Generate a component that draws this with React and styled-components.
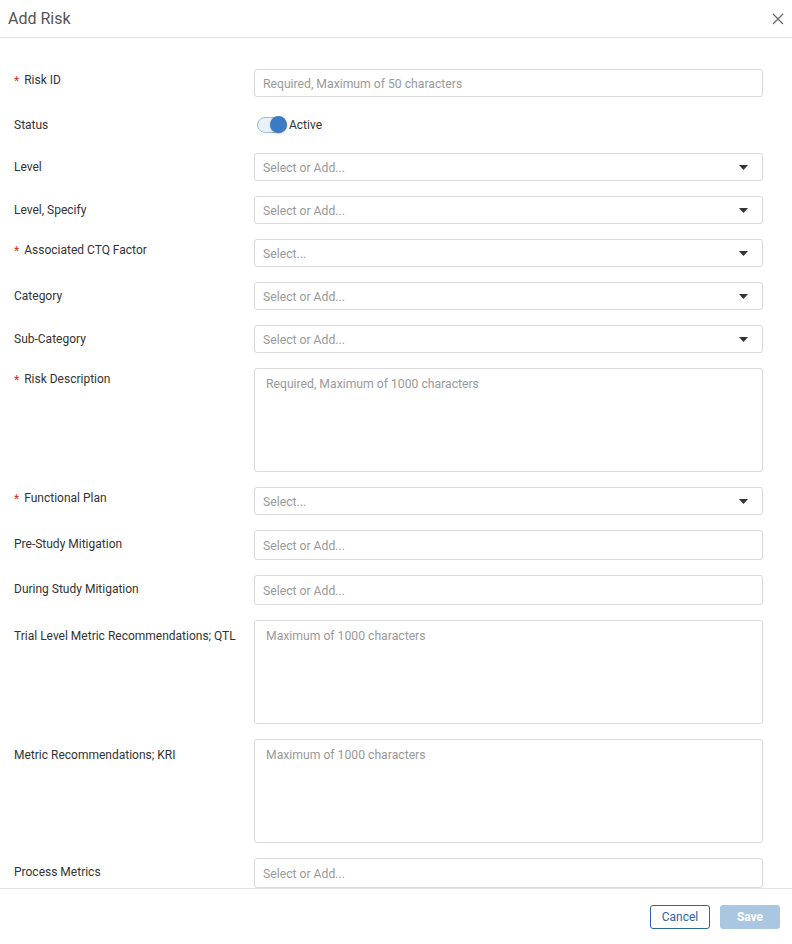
import React from "react"
import styled, { createGlobalStyle } from "styled-components"

const GlobalStyle = createGlobalStyle`
  html, body {
    margin: 0;
    padding: 0;
    background: #fff;
  }
  body {
    font-family: Roboto, "Liberation Sans", Arial, sans-serif;
    color: #333;
  }
`

const fields = [
  { label: "Risk ID", required: true, kind: "input", placeholder: "Required, Maximum of 50 characters" },
  { label: "Status", kind: "toggle" },
  { label: "Level", kind: "select", placeholder: "Select or Add..." },
  { label: "Level, Specify", kind: "select", placeholder: "Select or Add..." },
  { label: "Associated CTQ Factor", required: true, kind: "select", placeholder: "Select..." },
  { label: "Category", kind: "select", placeholder: "Select or Add..." },
  { label: "Sub-Category", kind: "select", placeholder: "Select or Add..." },
  { label: "Risk Description", required: true, kind: "area", placeholder: "Required, Maximum of 1000 characters" },
  { label: "Functional Plan", required: true, kind: "select", placeholder: "Select..." },
  { label: "Pre-Study Mitigation", kind: "multi", placeholder: "Select or Add..." },
  { label: "During Study Mitigation", kind: "multi", placeholder: "Select or Add..." },
  { label: "Trial Level Metric Recommendations; QTL", kind: "area", placeholder: "Maximum of 1000 characters" },
  { label: "Metric Recommendations; KRI", kind: "area", placeholder: "Maximum of 1000 characters" },
  { label: "Process Metrics", kind: "multi", placeholder: "Select or Add..." },
]

const Caret = () => (
  <svg width="9" height="5" viewBox="0 0 9 5">
    <path d="M0 0h9L4.5 5z" fill="#333" />
  </svg>
)

const CloseIcon = () => (
  <svg width="12" height="12" viewBox="0 0 12 12">
    <path d="M1 1l10 10M11 1L1 11" stroke="#666" strokeWidth="1.2" fill="none" />
  </svg>
)

const Control = ({ field }) => {
  if (field.kind === "toggle") {
    return (
      <ToggleWrap>
        <Track>
          <Knob />
        </Track>
        <ToggleText>Active</ToggleText>
      </ToggleWrap>
    )
  }
  if (field.kind === "area") {
    return <TextArea placeholder={field.placeholder} />
  }
  return (
    <Box $tall={field.kind === "multi"}>
      <Placeholder>{field.placeholder}</Placeholder>
      {field.kind === "select" && <Caret />}
    </Box>
  )
}

const App = () => {
  return (
    <>
      <GlobalStyle />
      <Dialog>
        <Header>
          <Title>Add Risk</Title>
          <CloseButton>
            <CloseIcon />
          </CloseButton>
        </Header>
        <Body>
          {fields.map((field) => (
            <Row key={field.label} $toggle={field.kind === "toggle"}>
              <Label
                $required={field.required}
                $area={field.kind === "area"}
                $toggle={field.kind === "toggle"}
              >
                {field.required && <Star>*</Star>}
                {field.label}
              </Label>
              <Control field={field} />
            </Row>
          ))}
        </Body>
        <Footer>
          <CancelButton>Cancel</CancelButton>
          <SaveButton>Save</SaveButton>
        </Footer>
      </Dialog>
    </>
  )
}

export default App

const Dialog = styled.div`
  width: 792px;
  height: 944px;
  display: flex;
  flex-direction: column;
  background: #fff;
`

const Header = styled.div`
  height: 37px;
  border-bottom: 1px solid #e3e3e3;
  display: flex;
  align-items: center;
  justify-content: space-between;
  padding: 0 7px 0 8px;
  flex-shrink: 0;
`

const Title = styled.h2`
  margin: 0;
  font-size: 16px;
  font-weight: 400;
  color: #555;
`

const CloseButton = styled.div`
  width: 14px;
  height: 14px;
  display: flex;
  align-items: center;
  justify-content: center;
`

const Body = styled.div`
  flex: 1;
  overflow: hidden;
  padding: 31px 29px 0 14px;
  display: flex;
  flex-direction: column;
  gap: 15px;
`

const Row = styled.div`
  display: grid;
  grid-template-columns: 240px 1fr;
  align-items: ${(p) => (p.$toggle ? "center" : "start")};
  min-height: ${(p) => (p.$toggle ? "26px" : "auto")};
  flex-shrink: 0;
`

const Label = styled.div`
  font-size: 12px;
  line-height: 14px;
  color: #333;
  padding-top: ${(p) => (p.$toggle ? "0" : p.$required ? "4px" : p.$area ? "9px" : "7px")};
  margin-top: ${(p) => (p.$toggle ? "-1px" : "0")};
  white-space: nowrap;
`

const Star = styled.span`
  color: #d0342c;
  font-size: 12px;
  margin-right: 5px;
  position: relative;
  top: 1px;
`

const Box = styled.div`
  height: ${(p) => (p.$tall ? "28px" : "26px")};
  border: 1px solid #d9d9d9;
  border-radius: 3px;
  display: flex;
  align-items: center;
  justify-content: space-between;
  padding: 0 14px 0 8px;
`

const Placeholder = styled.span`
  font-size: 12.2px;
  color: #9a9a9a;
  padding-top: 2px;
`

const TextArea = styled.textarea`
  height: 104px;
  box-sizing: border-box;
  border: 1px solid #d9d9d9;
  border-radius: 3px;
  padding: 8px 11px;
  font-family: Roboto, "Liberation Sans", Arial, sans-serif;
  font-size: 12.2px;
  line-height: 14px;
  resize: none;
  outline: none;
  &::placeholder {
    color: #9a9a9a;
  }
`

const ToggleWrap = styled.div`
  display: flex;
  align-items: center;
  padding-left: 3px;
  gap: 2px;
`

const Track = styled.div`
  width: 28px;
  height: 14px;
  border-radius: 8px;
  background: #eaf1f9;
  border: 1px solid #9dbbe0;
  position: relative;
`

const Knob = styled.div`
  position: absolute;
  right: -1px;
  top: -2px;
  width: 17px;
  height: 17px;
  border-radius: 50%;
  background: #3b7bc4;
  box-shadow: 0 1px 2px rgba(0, 0, 0, 0.25);
`

const ToggleText = styled.span`
  font-size: 12px;
  color: #333;
`

const Footer = styled.div`
  height: 55px;
  border-top: 1px solid #e3e3e3;
  display: flex;
  align-items: center;
  justify-content: flex-end;
  gap: 10px;
  padding: 0 12px 0 0;
  flex-shrink: 0;
`

const CancelButton = styled.button`
  width: 60px;
  height: 24px;
  border: 1px solid #2b64a8;
  border-radius: 3px;
  background: #fff;
  color: #2b64a8;
  font-family: Roboto, "Liberation Sans", Arial, sans-serif;
  font-size: 12px;
  padding: 0;
`

const SaveButton = styled.button`
  width: 60px;
  height: 24px;
  border: none;
  border-radius: 3px;
  background: #aac7e2;
  color: #fff;
  font-family: Roboto, "Liberation Sans", Arial, sans-serif;
  font-size: 12px;
  font-weight: 700;
  padding: 0;
`
